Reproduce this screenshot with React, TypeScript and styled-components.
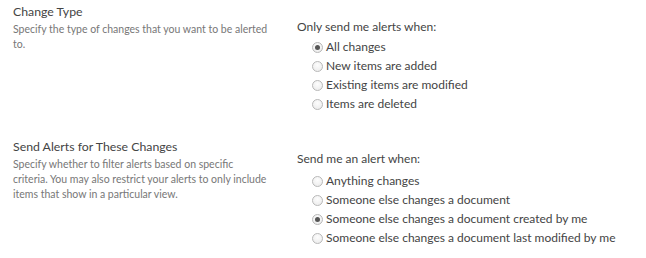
import React, { FC } from 'react';
import styled, { createGlobalStyle } from 'styled-components';

const GlobalStyle = createGlobalStyle`
	body {
		margin: 0;
		background: #ffffff;
		font-family: Lato, 'Open Sans', sans-serif;
	}
`;

const Page = styled.div`
	width: 646px;
	height: 258px;
	padding: 3px 0 0 13px;
	box-sizing: border-box;
	display: flex;
	flex-direction: column;
	gap: 25px;
`;

const Section = styled.div`
	display: grid;
	grid-template-columns: 284px 1fr;
`;

const SectionInfo = styled.div`
	display: flex;
	flex-direction: column;
	gap: 1px;
`;

const SectionTitle = styled.div`
	font-size: 12.3px;
	line-height: 18px;
	color: #444444;
`;

const SectionDescription = styled.div`
	font-size: 10.5px;
	line-height: 15px;
	color: #777777;
	white-space: nowrap;
`;

const Options = styled.div<{ $offset: number }>`
	padding-top: ${({ $offset }) => $offset}px;
	display: flex;
	flex-direction: column;
`;

const OptionsLabel = styled.div<{ $gap: number }>`
	font-size: 12px;
	line-height: 18px;
	color: #444444;
	margin-bottom: ${({ $gap }) => $gap}px;
`;

const OptionRow = styled.label`
	display: flex;
	align-items: center;
	gap: 3px;
	padding-left: 15px;
	height: 19px;
	font-size: 12px;
	color: #444444;
`;

const RadioCircle = styled.span<{ $checked: boolean }>`
	width: 9px;
	height: 9px;
	border-radius: 50%;
	border: 1px solid #b8b8b8;
	background: radial-gradient(circle at 50% 35%, #fdfdfd 0%, #e9e9e9 100%);
	display: flex;
	align-items: center;
	justify-content: center;
	flex-shrink: 0;
	margin-top: 1px;

	&::after {
		content: '';
		width: 5px;
		height: 5px;
		border-radius: 50%;
		background: ${({ $checked }) => ($checked ? '#555555' : 'transparent')};
	}
`;

interface OptionGroup {
	title: string;
	description: string[];
	label: string;
	offset: number;
	labelGap: number;
	options: string[];
	selected: number;
}

const groups: OptionGroup[] = [
	{
		title: 'Change Type',
		description: [
			'Specify the type of changes that you want to be alerted',
			'to.',
		],
		label: 'Only send me alerts when:',
		offset: 15,
		labelGap: 1,
		options: [
			'All changes',
			'New items are added',
			'Existing items are modified',
			'Items are deleted',
		],
		selected: 0,
	},
	{
		title: 'Send Alerts for These Changes',
		description: [
			'Specify whether to filter alerts based on specific',
			'criteria. You may also restrict your alerts to only include',
			'items that show in a particular view.',
		],
		label: 'Send me an alert when:',
		offset: 12,
		labelGap: 3,
		options: [
			'Anything changes',
			'Someone else changes a document',
			'Someone else changes a document created by me',
			'Someone else changes a document last modified by me',
		],
		selected: 2,
	},
];

const AlertSection: FC<{ group: OptionGroup }> = ({ group }) => (
	<Section>
		<SectionInfo>
			<SectionTitle>{group.title}</SectionTitle>
			<div>
				{group.description.map((line) => (
					<SectionDescription key={line}>{line}</SectionDescription>
				))}
			</div>
		</SectionInfo>
		<Options $offset={group.offset}>
			<OptionsLabel $gap={group.labelGap}>{group.label}</OptionsLabel>
			{group.options.map((option, i) => (
				<OptionRow key={option}>
					<RadioCircle $checked={i === group.selected} />
					{option}
				</OptionRow>
			))}
		</Options>
	</Section>
);

export default function App() {
	return (
		<>
			<GlobalStyle />
			<Page>
				{groups.map((group) => (
					<AlertSection key={group.title} group={group} />
				))}
			</Page>
		</>
	);
}
